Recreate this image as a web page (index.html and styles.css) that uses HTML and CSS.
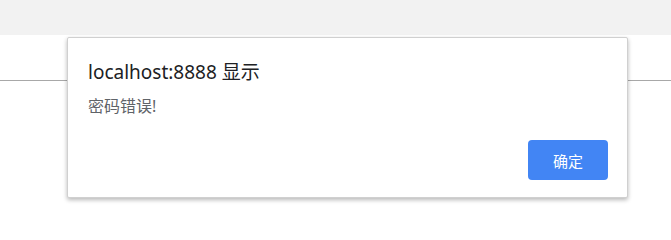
FILE: index.html
```html
<!DOCTYPE html>
<html lang="zh-CN">
<head>
<meta charset="utf-8">
<link rel="stylesheet" href="styles.css">
</head>
<body>
<div class="topbar"></div>
<div class="header"></div>
<div class="dialog">
  <div class="title">localhost:8888 显示</div>
  <div class="message">密码错误!</div>
  <div class="actions"><button class="ok">确定</button></div>
</div>
</body>
</html>
```
FILE: styles.css
```css
html, body {
  margin: 0;
  padding: 0;
  background: #ffffff;
  font-family: "Noto Sans", "Noto Sans CJK SC", sans-serif;
}
.topbar {
  height: 35px;
  background: #f2f2f2;
}
.header {
  height: 45px;
  border-bottom: 1px solid #a8a8a8;
}
.dialog {
  position: absolute;
  left: 67px;
  top: 37px;
  width: 561px;
  height: 161px;
  box-sizing: border-box;
  background: #ffffff;
  border: 1px solid #d0d0d0;
  border-radius: 2px;
  box-shadow: 0 2px 4px rgba(0, 0, 0, 0.28);
  padding: 21px 19px 17px 20px;
  display: flex;
  flex-direction: column;
}
.title {
  font-size: 19px;
  line-height: 26px;
  color: #202124;
}
.message {
  margin-top: 10px;
  font-size: 16px;
  line-height: 22px;
  color: #5f6368;
}
.actions {
  display: flex;
  justify-content: flex-end;
  margin-top: auto;
}
.ok {
  width: 80px;
  height: 40px;
  border: none;
  border-radius: 4px;
  background: #4285f4;
  color: #ffffff;
  font-family: "Noto Sans CJK SC", sans-serif;
  font-size: 15px;
  padding: 0;
}
```
